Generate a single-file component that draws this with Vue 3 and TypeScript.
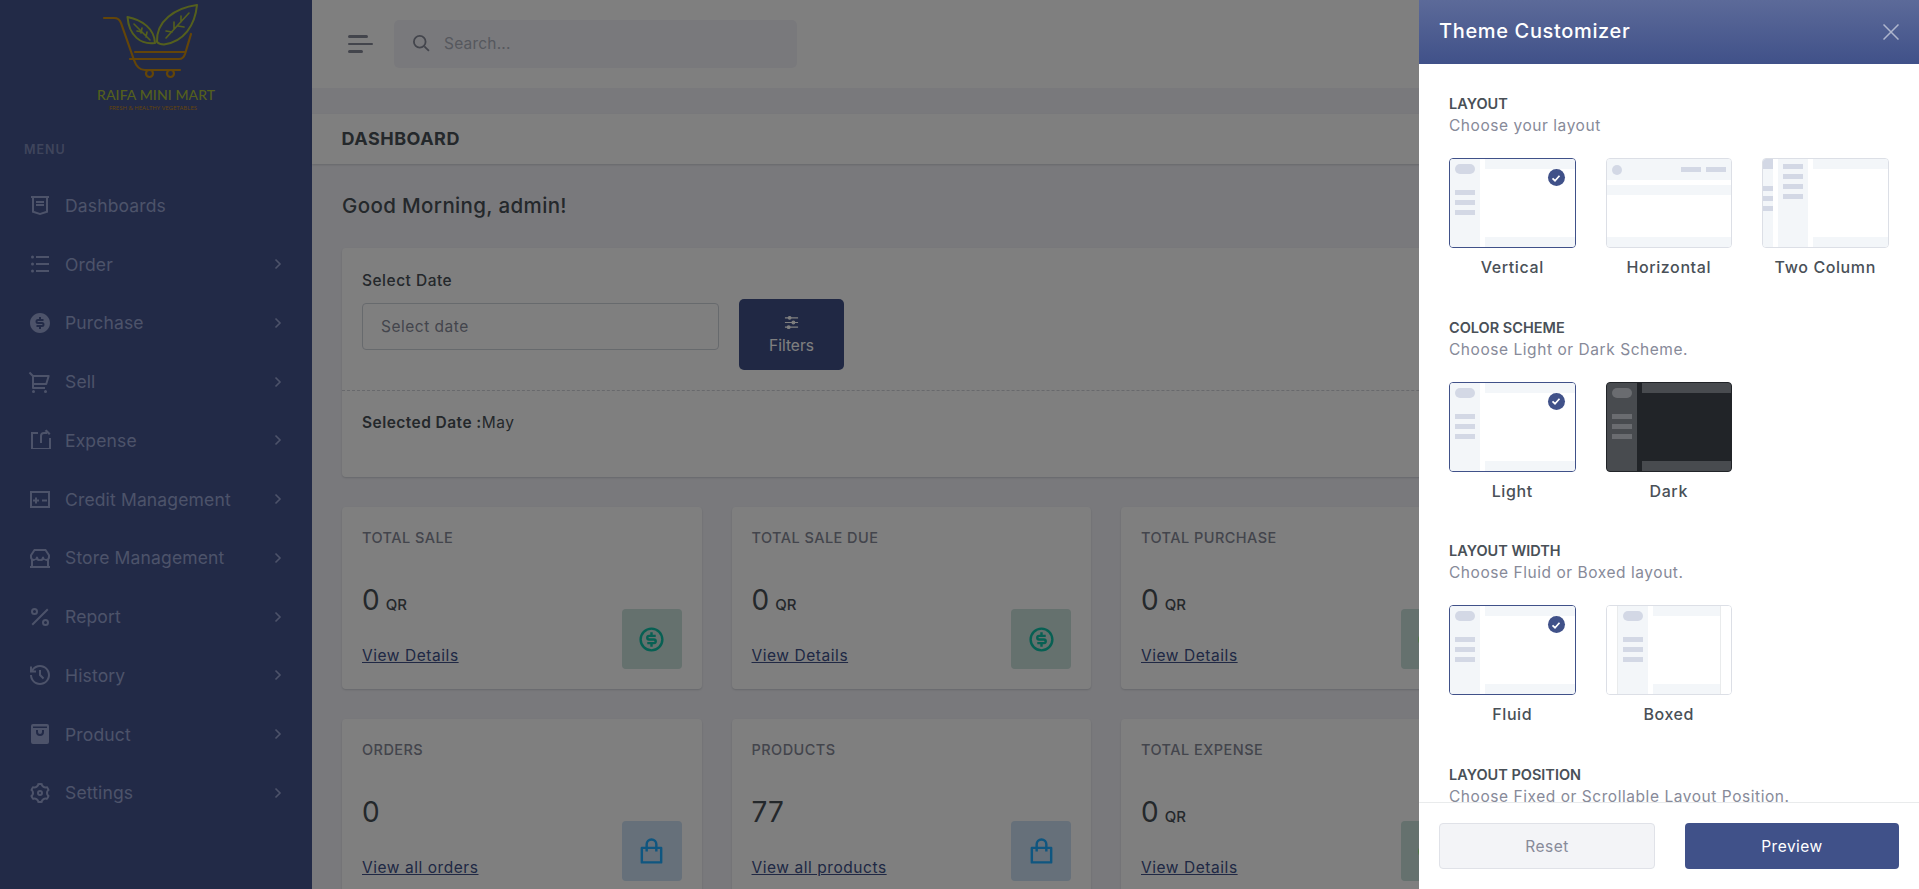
<script setup lang="ts">
interface NavItem { label: string; icon: string; chevron: boolean }
interface Stat { title: string; value: string; unit: string; link: string; tone: 'teal' | 'blue' | 'green'; icon: 'dollar' | 'bag' }
interface Thumb { label: string; kind: string; active?: boolean }
interface Section { title: string; sub: string; thumbs: Thumb[] }

const dollar = 'M12 22C6.477 22 2 17.523 2 12S6.477 2 12 2s10 4.477 10 10-4.477 10-10 10zm0-2a8 8 0 1 0 0-16 8 8 0 0 0 0 16zm-3.5-6H14a.5.5 0 1 0 0-1h-4a2.5 2.5 0 1 1 0-5h1V6h2v2h2.5v2H10a.5.5 0 1 0 0 1h4a2.5 2.5 0 1 1 0 5h-1v2h-2v-2H8.5v-2z'
const bag = 'M7 8V6a5 5 0 1 1 10 0v2h3a1 1 0 0 1 1 1v12a1 1 0 0 1-1 1H4a1 1 0 0 1-1-1V9a1 1 0 0 1 1-1h3zm0 2H5v10h14V10h-2v2h-2v-2H9v2H7v-2zm2-2h6V6a3 3 0 0 0-6 0v2z'

const nav: NavItem[] = [
  { label: 'Dashboards', chevron: false, icon: 'M21 3v2h-1v14.5l-8 2.5-8-2.5V5H3V3h18zM6 5v13l6 1.9 6-1.9V5H6zm2 3h8v2H8V8zm0 3h8v2H8v-2z' },
  { label: 'Order', chevron: true, icon: 'M8 4h13v2H8V4zM4.5 6.5a1.5 1.5 0 1 1 0-3 1.5 1.5 0 0 1 0 3zm0 7a1.5 1.5 0 1 1 0-3 1.5 1.5 0 0 1 0 3zm0 6.9a1.5 1.5 0 1 1 0-3 1.5 1.5 0 0 1 0 3zM8 11h13v2H8v-2zm0 7h13v2H8v-2z' },
  { label: 'Purchase', chevron: true, icon: 'M12 22C6.477 22 2 17.523 2 12S6.477 2 12 2s10 4.477 10 10-4.477 10-10 10zm-3.5-8v2H11v2h2v-2h1a2.5 2.5 0 1 0 0-5h-4a.5.5 0 1 1 0-1h5.5V8H13V6h-2v2h-1a2.5 2.5 0 1 0 0 5h4a.5.5 0 1 1 0 1H8.5z' },
  { label: 'Sell', chevron: true, icon: 'M4 6.414L.757 3.172l1.415-1.415L5.414 5h15.242a1 1 0 0 1 .958 1.287l-2.4 8a1 1 0 0 1-.958.713H6v2h11v2H5a1 1 0 0 1-1-1V6.414zM6 7v6h11.512l1.8-6H6zm-.5 16a1.5 1.5 0 1 1 0-3 1.5 1.5 0 0 1 0 3zm12 0a1.5 1.5 0 1 1 0-3 1.5 1.5 0 0 1 0 3z' },
  { label: 'Expense', chevron: true, icon: 'M10 4v2H5v14h16v-10h2v11H3V4h7zm8.5-2.5L22.5 5.5 21 7l-2-2v1h-3a2 2 0 0 0-2 2v7h-2V8a4 4 0 0 1 4-4h2L16.5 3 18.5 1.5z' },
  { label: 'Credit Management', chevron: true, icon: 'M2 4h20v17H2V4zm2 2v13h16V6H4zm3 4.5h2v2h2v2H9v2H7v-2H5v-2h2v-2zM14 12.5h5v2h-5v-2z' },
  { label: 'Store Management', chevron: true, icon: 'M6 3h12l4 6v2.5a3 3 0 0 1-1 2.2V20h1v2H2v-2h1v-6.3a3 3 0 0 1-1-2.2V9l4-6zm1 2L4 9.5V11a2 2 0 0 0 4 .2c.3-.8 1.5-.8 2 0a2 2 0 0 0 4 0c.5-.8 1.7-.8 2 0a2 2 0 0 0 4-.2V9.5L17 5H7zm-2 9.9V20h14v-5.1a4 4 0 0 1-3-1.1 4 4 0 0 1-4 .9 4 4 0 0 1-4-.9 4 4 0 0 1-3 1.1z' },
  { label: 'Report', chevron: true, icon: 'M17.5 21a3.5 3.5 0 1 1 0-7 3.5 3.5 0 0 1 0 7zm0-2a1.5 1.5 0 1 0 0-3 1.5 1.5 0 0 0 0 3zm-11-9a3.5 3.5 0 1 1 0-7 3.5 3.5 0 0 1 0 7zm0-2a1.5 1.5 0 1 0 0-3 1.5 1.5 0 0 0 0 3zm12.571-4.485l1.414 1.414L4.93 20.485l-1.414-1.414z' },
  { label: 'History', chevron: true, icon: 'M12 2c5.523 0 10 4.477 10 10s-4.477 10-10 10S2 17.523 2 12h2c0 4.418 3.582 8 8 8s8-3.582 8-8-3.582-8-8-8C9.25 4 6.824 5.387 5.385 7.5H8v2H2v-6h2V6c1.824-2.43 4.729-4 8-4zm1 5v4.585l3.243 3.243-1.415 1.415L11 12.413V7h2z' },
  { label: 'Product', chevron: true, icon: 'M5 2h14a2 2 0 0 1 2 2v16a2 2 0 0 1-2 2H5a2 2 0 0 1-2-2V4a2 2 0 0 1 2-2zm3 6v2a4 4 0 0 0 8 0V8h-2v2a2 2 0 0 1-4 0V8H8zM5 4.5V6h14V4.5H5z' },
  { label: 'Settings', chevron: true, icon: 'M3.34 17a10.018 10.018 0 0 1-.978-2.326 3 3 0 0 0 .002-5.347A9.99 9.99 0 0 1 4.865 4.99a3 3 0 0 0 4.631-2.674 9.99 9.99 0 0 1 5.007.002 3 3 0 0 0 4.632 2.672c.579.59 1.093 1.261 1.525 2.01.433.749.757 1.53.978 2.326a3 3 0 0 0-.002 5.347 9.99 9.99 0 0 1-2.501 4.337 3 3 0 0 0-4.631 2.674 9.99 9.99 0 0 1-5.007-.002 3 3 0 0 0-4.632-2.672A10.018 10.018 0 0 1 3.34 17zm5.66.196a4.993 4.993 0 0 1 2.25 2.77c.499.047 1 .048 1.499.001A4.993 4.993 0 0 1 15 17.197a4.993 4.993 0 0 1 3.525-.565c.29-.408.54-.843.748-1.298A4.993 4.993 0 0 1 18 12c0-1.26.47-2.437 1.273-3.334a8.126 8.126 0 0 0-.75-1.298A4.993 4.993 0 0 1 15 6.804a4.993 4.993 0 0 1-2.25-2.77c-.499-.047-1-.048-1.499-.001A4.993 4.993 0 0 1 9 6.803a4.993 4.993 0 0 1-3.525.565 7.99 7.99 0 0 0-.748 1.298A4.993 4.993 0 0 1 6 12c0 1.26-.47 2.437-1.273 3.334a8.126 8.126 0 0 0 .75 1.298A4.993 4.993 0 0 1 9 17.196zM12 15a3 3 0 1 1 0-6 3 3 0 0 1 0 6zm0-2a1 1 0 1 0 0-2 1 1 0 0 0 0 2z' }
]

const stats: Stat[] = [
  { title: 'TOTAL SALE', value: '0', unit: 'QR', link: 'View Details', tone: 'teal', icon: 'dollar' },
  { title: 'TOTAL SALE DUE', value: '0', unit: 'QR', link: 'View Details', tone: 'teal', icon: 'dollar' },
  { title: 'TOTAL PURCHASE', value: '0', unit: 'QR', link: 'View Details', tone: 'green', icon: 'dollar' },
  { title: 'ORDERS', value: '0', unit: '', link: 'View all orders', tone: 'blue', icon: 'bag' },
  { title: 'PRODUCTS', value: '77', unit: '', link: 'View all products', tone: 'blue', icon: 'bag' },
  { title: 'TOTAL EXPENSE', value: '0', unit: 'QR', link: 'View Details', tone: 'green', icon: 'dollar' }
]

const sections: Section[] = [
  { title: 'LAYOUT', sub: 'Choose your layout', thumbs: [
    { label: 'Vertical', kind: 'vertical', active: true },
    { label: 'Horizontal', kind: 'horizontal' },
    { label: 'Two Column', kind: 'two' }
  ] },
  { title: 'COLOR SCHEME', sub: 'Choose Light or Dark Scheme.', thumbs: [
    { label: 'Light', kind: 'vertical', active: true },
    { label: 'Dark', kind: 'dark' }
  ] },
  { title: 'LAYOUT WIDTH', sub: 'Choose Fluid or Boxed layout.', thumbs: [
    { label: 'Fluid', kind: 'vertical', active: true },
    { label: 'Boxed', kind: 'boxed' }
  ] },
  { title: 'LAYOUT POSITION', sub: 'Choose Fixed or Scrollable Layout Position.', thumbs: [] }
]
</script>

<template>
  <div class="app">
    <aside class="sidebar">
      <div class="brand">
        <svg class="brand-mark" viewBox="95 0 110 80" width="110" height="80" fill="none">
          <g stroke="#c88a10" stroke-width="2.2" stroke-linecap="round" stroke-linejoin="round">
            <path d="M104 18h10c4 0 6 2 7 5l13 37c2 6 5 10 11 10h35" />
            <path d="M135 52h50" />
            <path d="M130 59h49c3 0 5-2 6-5l6-20" />
            <circle cx="149.5" cy="73.5" r="3.5" />
            <circle cx="170.5" cy="73.5" r="3.5" />
          </g>
          <g stroke="#a9bf3b" stroke-width="2" stroke-linecap="round" stroke-linejoin="round">
            <path d="M127.5 17c15 3 27 12 27.5 26-14 2-26-7-27.5-26z" />
            <path d="M134 24l16 16M141 33l1-5M146 37l1-5M137 31l5 1" stroke-width="1.6" />
            <path d="M197 5c-22 3-41 16-40 37 2 2 4 2.5 7 2.5 20-3 31-19 33-39.5z" />
            <path d="M189 13l-23 25M181 22v-6M174 29v-7M172 32l-6-1M178 26l6 1" stroke-width="1.6" />
          </g>
        </svg>
        <div class="brand-name">RAIFA MINI MART</div>
        <div class="brand-sub">FRESH &amp; HEALTHY VEGETABLES</div>
      </div>
      <div class="menu-title">MENU</div>
      <nav class="nav">
        <div v-for="item in nav" :key="item.label" class="nav-item">
          <svg class="nav-icon" viewBox="0 0 24 24" width="24" height="24" fill="currentColor"><path :d="item.icon" fill-rule="evenodd" /></svg>
          <span class="nav-label">{{ item.label }}</span>
          <svg v-if="item.chevron" class="chev" viewBox="0 0 8 12" width="8" height="12" fill="none" stroke="currentColor" stroke-width="1.6"><path d="M1.5 1.5 6 6l-4.5 4.5" /></svg>
        </div>
      </nav>
    </aside>

    <main class="main">
      <header class="topbar">
        <div class="burger"><i class="b1"></i><i class="b2"></i><i class="b3"></i></div>
        <label class="search">
          <svg viewBox="0 0 24 24" width="20" height="20" fill="none" stroke="currentColor" stroke-width="2.2"><circle cx="10.5" cy="10.5" r="7" /><path d="m16 16 5.5 5.5" /></svg>
          <input placeholder="Search..." />
        </label>
      </header>
      <div class="page-title">DASHBOARD</div>
      <div class="content">
        <h2 class="greeting">Good Morning, admin!</h2>
        <section class="filter-card">
          <div class="filter-top">
            <div class="field">
              <div class="field-label">Select Date</div>
              <input class="date" placeholder="Select date" />
            </div>
            <button class="filter-btn">
              <svg viewBox="0 0 16 16" width="15" height="15" fill="none" stroke="currentColor" stroke-width="1.3"><path d="M1 3h14M1 8h14M1 13h14" /><circle cx="6" cy="3" r="1.4" fill="currentColor" /><circle cx="10" cy="8" r="1.4" fill="currentColor" /><circle cx="5" cy="13" r="1.4" fill="currentColor" /></svg>
              <span>Filters</span>
            </button>
          </div>
          <div class="filter-bottom"><b>Selected Date :</b>May</div>
        </section>
        <section class="stats">
          <article v-for="s in stats" :key="s.title" class="stat">
            <div class="stat-text">
              <div class="stat-title">{{ s.title }}</div>
              <div class="stat-value">{{ s.value }}<small v-if="s.unit">{{ s.unit }}</small></div>
              <a class="stat-link">{{ s.link }}</a>
            </div>
            <div class="stat-icon" :class="s.tone">
              <svg viewBox="0 0 24 24" width="29" height="29" fill="currentColor"><path :d="s.icon === 'dollar' ? dollar : bag" fill-rule="evenodd" /></svg>
            </div>
          </article>
        </section>
      </div>
    </main>

    <div class="backdrop"></div>

    <aside class="panel">
      <header class="panel-head">
        <span class="panel-title">Theme Customizer</span>
        <svg viewBox="0 0 16 16" width="16" height="16" fill="none" stroke="#fff" stroke-opacity=".55" stroke-width="1.5"><path d="m.5.5 15 15M15.5.5l-15 15" /></svg>
      </header>
      <div class="panel-body">
        <section v-for="sec in sections" :key="sec.title" class="opt">
          <h6>{{ sec.title }}</h6>
          <p>{{ sec.sub }}</p>
          <div v-if="sec.thumbs.length" class="thumbs">
            <div v-for="t in sec.thumbs" :key="t.label" class="thumb-wrap">
              <div class="thumb" :class="[t.kind, { active: t.active }]">
                <template v-if="t.kind === 'horizontal'">
                  <div class="rest">
                    <div class="h-top"><i class="dot"></i><i class="spacer"></i><i class="ln"></i><i class="ln"></i></div>
                    <div class="h-sub"></div>
                    <div class="grow"></div>
                    <div class="bar foot"></div>
                  </div>
                </template>
                <template v-else>
                  <div v-if="t.kind === 'two'" class="rail"><i class="sq"></i><i class="rl"></i><i class="rl"></i><i class="rl"></i></div>
                  <div v-if="t.kind === 'boxed'" class="edge"></div>
                  <div class="side" :class="{ nopill: t.kind === 'two' }">
                    <i v-if="t.kind !== 'two'" class="pill"></i>
                    <i v-if="t.kind === 'two'" class="ln"></i>
                    <i class="ln"></i><i class="ln"></i><i class="ln"></i>
                  </div>
                  <div class="rest">
                    <div class="bar"></div>
                    <div class="grow"></div>
                    <div class="bar foot"></div>
                  </div>
                  <div v-if="t.kind === 'boxed'" class="edge right"></div>
                </template>
                <span v-if="t.active" class="check">
                  <svg viewBox="0 0 12 12" width="12" height="12" fill="none" stroke="#fff" stroke-width="1.7"><path d="m2.5 6.3 2.5 2.4 4.5-5" /></svg>
                </span>
              </div>
              <div class="thumb-label">{{ t.label }}</div>
            </div>
          </div>
        </section>
      </div>
      <footer class="panel-foot">
        <button class="btn reset">Reset</button>
        <button class="btn preview">Preview</button>
      </footer>
    </aside>
  </div>
</template>

<style>
html, body { margin: 0; padding: 0; overflow: hidden; }
</style>

<style scoped>
.app {
  position: relative;
  display: flex;
  width: 1919px;
  height: 889px;
  overflow: hidden;
  background: #f3f3f9;
  font-family: Inter, "Noto Sans", sans-serif;
  color: #495057;
}
.sidebar {
  width: 312px;
  flex: none;
  background: #44548e;
  display: flex;
  flex-direction: column;
  color: #9aa6d4;
}
.brand { height: 128px; display: flex; flex-direction: column; align-items: flex-start; padding-left: 95px; box-sizing: border-box; }
.brand-mark { display: block; }
.brand-name { margin: 7px 0 0 2px; font: 500 14px/16px Lato, Inter, sans-serif; color: #a9bf3b; letter-spacing: .1px; white-space: nowrap; }
.brand-sub { margin: 1px 0 0 14px; font: 400 6px/9px "Open Sans", sans-serif; color: #c88a10; white-space: nowrap; }
.menu-title { margin: 14px 0 0 24px; font-size: 12.5px; line-height: 16px; font-weight: 600; letter-spacing: 1px; color: #7f8ab8; }
.nav { margin-top: 18px; }
.nav-item { height: 58.75px; display: flex; align-items: center; padding-left: 28px; }
.nav-icon { flex: none; margin-right: 13px; }
.nav-label { flex: 1; font-size: 17.5px; letter-spacing: .15px; font-weight: 400; }
.chev { margin-right: 30px; }
.main { flex: 1; min-width: 0; display: flex; flex-direction: column; }
.topbar { height: 88px; flex: none; background: #fff; display: flex; align-items: center; padding-left: 36px; box-sizing: border-box; }
.burger { width: 25px; display: flex; flex-direction: column; gap: 5px; margin-right: 21px; }
.burger i { display: block; background: #878a99; border-radius: 2px; }
.b1 { width: 20px; height: 3px; }
.b2 { width: 25px; height: 2px; }
.b3 { width: 15px; height: 3px; }
.search { width: 403px; height: 48px; background: #f3f3f9; border-radius: 5px; display: flex; align-items: center; padding-left: 17px; padding-bottom: 2px; box-sizing: border-box; color: #878a99; }
.search input { border: 0; outline: 0; background: transparent; margin-left: 13px; font: 400 15.5px Inter, sans-serif; letter-spacing: .2px; color: #495057; width: 300px; padding: 0; }
.search input::placeholder { color: #adb0bc; }
.page-title { margin-top: 26px; height: 50px; flex: none; background: #fff; box-shadow: 0 1px 2px rgba(56,65,74,.2); padding: 0 0 2px 29.5px; display: flex; align-items: center; font-size: 18px; font-weight: 700; letter-spacing: .5px; color: #495057; box-sizing: border-box; }
.content { padding: 0 30px; }
.greeting { margin: 27px 0 0; height: 30px; font-size: 20.5px; line-height: 30px; font-weight: 500; letter-spacing: .36px; color: #495057; }
.filter-card { margin-top: 27px; height: 229px; background: #fff; border-radius: 4px; box-shadow: 0 1px 2px rgba(56,65,74,.2); width: 1547px; }
.filter-top { display: flex; height: 143px; padding: 0 20px; border-bottom: 1px dashed #d0d2d8; box-sizing: border-box; }
.field { width: 357px; padding-top: 21px; }
.field-label { font-size: 15.5px; line-height: 24px; font-weight: 500; letter-spacing: .5px; color: #495057; }
.date { display: block; margin-top: 10px; width: 100%; height: 47px; border: 1px solid #ced4da; border-radius: 4px; box-sizing: border-box; padding: 0 18px; font: 400 15.5px Inter, sans-serif; letter-spacing: .5px; background: #fff; outline: 0; }
.date::placeholder { color: #878a99; }
.filter-btn { margin: 51px 0 0 20px; width: 105px; height: 71px; border: 0; border-radius: 5px; background: #405189; color: #fff; display: flex; flex-direction: column; align-items: center; justify-content: center; gap: 6px; font: 400 15.5px Inter, sans-serif; }
.filter-bottom { padding: 21px 20px; font-size: 15.5px; line-height: 22px; letter-spacing: .45px; color: #495057; }
.filter-bottom b { font-weight: 600; }
.stats { margin-top: 30px; display: grid; grid-template-columns: repeat(3, 359.5px); gap: 30px; }
.stat { height: 182px; background: #fff; border-radius: 4px; box-shadow: 0 1px 2px rgba(56,65,74,.2); display: flex; justify-content: space-between; align-items: flex-end; padding: 20px; box-sizing: border-box; }
.stat-text { align-self: flex-start; }
.stat-title { font-size: 14.5px; line-height: 22px; font-weight: 500; letter-spacing: .45px; color: #878a99; }
.stat-value { margin-top: 33px; height: 36px; font-size: 28px; line-height: 36px; font-weight: 400; color: #495057; }
.stat-value small { margin-left: 6px; font-size: 15px; font-weight: 500; }
.stat-link { display: block; margin-top: 27px; font-size: 15.5px; line-height: 22px; letter-spacing: .55px; color: #405189; text-decoration: underline; }
.stat-icon { position: relative; z-index: 6; width: 60px; height: 60px; border-radius: 4px; display: flex; align-items: center; justify-content: center; }
.stat-icon.teal, .stat-icon.green { background: #65716e; color: #076053; }
.stat-icon.green { color: #3f7a2a; }
.stat-icon.blue { background: #66707a; color: #0f5680; }
.backdrop { position: absolute; inset: 0; z-index: 5; background: rgba(0,0,0,.5); }
.panel { position: absolute; top: 0; right: 0; bottom: 0; z-index: 10; width: 500px; background: #fff; display: flex; flex-direction: column; }
.panel-head { height: 64px; flex: none; background: linear-gradient(#5c6a99, #405189); display: flex; align-items: center; justify-content: space-between; padding: 0 20px 0 21px; color: #fff; box-sizing: border-box; }
.panel-title { font-size: 20px; font-weight: 500; letter-spacing: .65px; margin: -2px 0 0 -1px; }
.panel-body { flex: 1; min-height: 0; overflow: hidden; padding: 29px 30px 0; }
.opt { margin-bottom: 38.5px; }
.opt h6 { margin: 0; font-size: 14.5px; line-height: 21px; font-weight: 600; color: #495057; }
.opt p { margin: 1px 0 0; font-size: 15.5px; line-height: 22px; letter-spacing: .55px; color: #878a99; white-space: nowrap; }
.thumbs { margin-top: 21px; display: flex; gap: 30px; }
.thumb-wrap { width: 126.5px; }
.thumb { position: relative; height: 90px; box-sizing: border-box; border: 1px solid #dcdfe6; border-radius: 4px; display: flex; overflow: hidden; background: #fff; }
.thumb.active { border-color: #405189; }
.side { width: 30px; flex: none; background: #f3f6f9; padding: 5px 5px 0; box-sizing: border-box; display: flex; flex-direction: column; align-items: center; }
.side i { display: block; width: 20px; background: #d3d8e5; }
.side .pill { height: 10px; border-radius: 5px; margin-bottom: 16px; }
.side .ln { height: 5px; margin-bottom: 5px; }
.rest { flex: 1; margin-left: 5px; display: flex; flex-direction: column; min-width: 0; }
.bar { height: 10px; background: #f3f6f9; flex: none; }
.foot { height: 10px; }
.grow { flex: 1; }
.horizontal .rest { margin-left: 0; }
.h-top { height: 21px; background: #f3f6f9; display: flex; align-items: center; padding: 0 5px; flex: none; }
.h-top .dot { width: 10px; height: 10px; border-radius: 50%; background: #d3d8e5; }
.h-top .spacer { flex: 1; }
.h-top .ln { width: 20px; height: 5px; background: #d3d8e5; margin-left: 5px; }
.h-sub { height: 10px; margin-top: 5px; background: #f3f6f9; flex: none; }
.rail { width: 10px; flex: none; background: #f3f6f9; display: flex; flex-direction: column; }
.rail i { display: block; background: #d3d8e5; }
.rail .sq { height: 10px; margin-bottom: 17px; }
.rail .rl { height: 5px; margin-bottom: 5px; }
.two .side { margin-left: 5px; }
.edge { width: 10px; flex: none; background: #fff; border-right: 1px solid #e9ebec; }
.edge.right { border-right: 0; border-left: 1px solid #e9ebec; }
.dark { background: #212428; border-color: #212428; }
.dark .side, .dark .bar { background: #484b4f; }
.dark .side i { background: #6a6c70; }
.check { position: absolute; top: 10px; right: 10px; width: 17px; height: 17px; border-radius: 50%; background: #405189; display: flex; align-items: center; justify-content: center; }
.thumb-label { margin-top: 8px; text-align: center; font-size: 16px; line-height: 22px; font-weight: 500; letter-spacing: .6px; color: #495057; }
.panel-foot { height: 87px; flex: none; border-top: 1px solid #e9ebec; padding: 20px; box-sizing: border-box; display: flex; gap: 30px; }
.btn { flex: 1; height: 46px; border-radius: 4px; font: 400 15.5px Inter, sans-serif; letter-spacing: .5px; }
.reset { background: #f3f4f7; border: 1px solid #e0e2e8; color: #878a99; }
.preview { background: #405189; border: 0; color: #fff; }
</style>
